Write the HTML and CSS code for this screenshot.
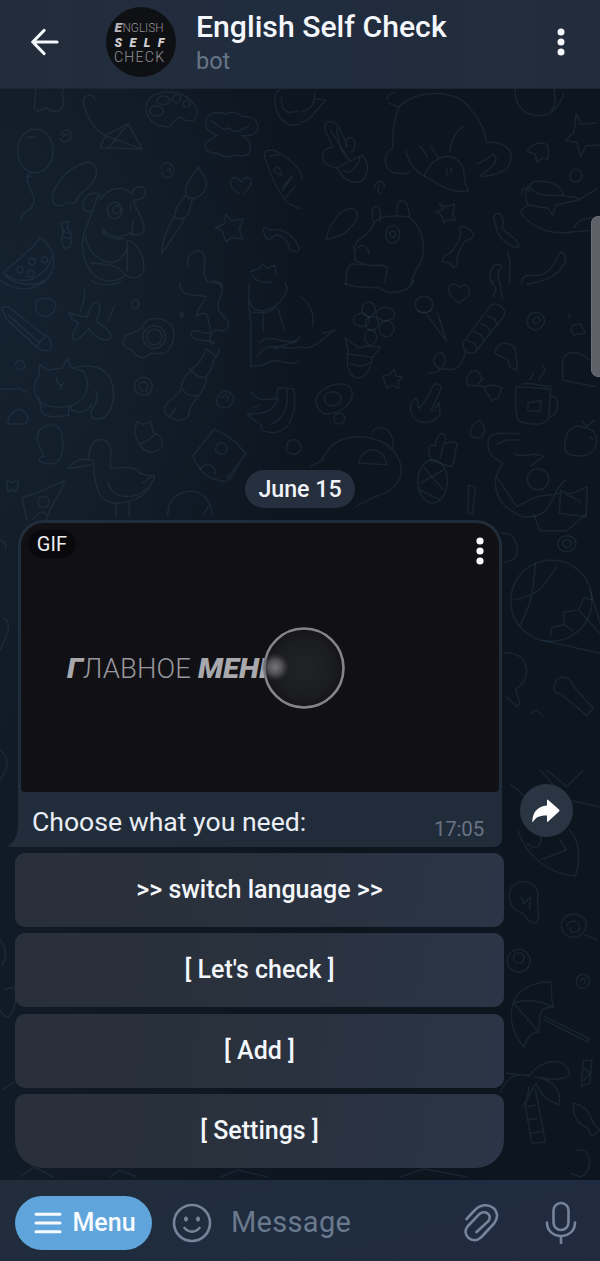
FILE: index.html
```html
<!DOCTYPE html>
<html lang="en">
<head>
<meta charset="utf-8">
<title>English Self Check</title>
<link rel="stylesheet" href="styles.css">
</head>
<body>
<div class="app">
  <header class="header">
    <svg class="back" viewBox="0 0 28 28"><path d="M26 14H2M13 2.500 1.800 14 13 25.500"/></svg>
    <svg class="avatar" viewBox="0 0 70 70">
      <circle cx="35" cy="35" r="35" fill="#0f1013"/>
      <g class="logo-text">
        <text x="8.500" y="25" textLength="7.500" lengthAdjust="spacingAndGlyphs" class="heavy">E</text>
        <text x="16.500" y="25" textLength="41" lengthAdjust="spacingAndGlyphs" class="thin">NGLISH</text>
        <text x="8.500" y="39.500" textLength="50" class="heavy self">SELF</text>
        <text x="8" y="54.500" textLength="50" class="thin check">CHECK</text>
      </g>
    </svg>
    <div class="titles">
      <div class="title">English Self Check</div>
      <div class="subtitle">bot</div>
    </div>
    <svg class="dots" viewBox="0 0 8 28"><circle cx="4" cy="4" r="3.500"/><circle cx="4" cy="14" r="3.500"/><circle cx="4" cy="24" r="3.500"/></svg>
  </header>

  <main class="chat">
    <svg class="wallpaper" viewBox="0 89 600 1091">
      <g transform="translate(0 85) scale(.33333)">
        <path d="M106 12c6 22-8 45-2 60 12 12 22 2 34-5 10 12 24 14 40 9 14-10 16-34 8-46l4-18M285 45c-8-24-36-14-35 8 6 36 30 76 52 90l22 14M300 188l18-38 66-34 42 76zM384 118l-58 70M318 152l106 40M300 188l126 4"/>
        <ellipse cx="106" cy="198" rx="53" ry="66"/><path d="M92 262l-12 12h16M82 276c-4 32 36 60 12 92-12 10-34 16-30 40M80 158l24-4M182 152c2-22 34-22 32 0s-30 24-34 6M190 156c2-12 16-8 14 0M438 72c-2-40 40-54 80-50 40 4 78 34 72 70-6 22-30 18-44 8-16-14-22 16-38 24-34 6-70-20-70-52z"/>
        <ellipse cx="490" cy="46" rx="20" ry="13"/><ellipse cx="470" cy="78" rx="21" ry="15"/><circle cx="530" cy="42" r="12"/><circle cx="560" cy="56" r="10"/>
        <path d="M618 105c8-26 40-26 60-18 18-10 38-4 50 8 24-4 46 8 46 36-8 24-34 22-50 20 32 14 30 34 24 54-16 14-34 4-48 6-20 10-40 0-50-8-20 4-38-6-34-26 10-10 22-18 38-28-22 0-40-16-36-44zM630 108c24 4 32 36 56 20 20 24 38 2 60-4M826 60c-6-36 10-48 24-50M845 36c-6 40 18 56 48 40M826 60c10 50 40 70 74 56M158 330c10-46 70-98 108-98 42 12 22 60-16 88-22 14-18 44-44 32-22 12-54 22-48-22zM482 252c4-30 44-18 40 8-8 26-42 22-34-4M500 258c8-18 20 0 6 6M596 246c-28 40-44 56-38 84 14 20 44 10 60-20 8-28-12-42-22-64zM558 332c-16 12-30 38-36 62 14 12 30 10 42-6l16-52M522 394c-24 40-34 70-38 112 20-28 48-64 72-110"/>
        <path d="M722 326c-34-10-40-48-16-48 14 0 12 12 18 12 10-20 34-16 28 10l-22 28M678 388l16 20 36-6-12 30 10 30-34-4-16 12-10-30-22-14 26-8zM796 220c-10-30 18-28 40-18 30 18 70 50 70 80M796 220c12 44 38 96 64 132l40 20M808 214l30-6M846 320l34-50M822 258q8-24 20 0t-20 0M880 270l-36 40M888 300l-32 40M790 438c-4-16 12-10 18-2 40-10 84 20 90 62M790 438c10 36 20 26 36 12 24 0 38 18 44 46l26 4M750 560l30-10 8-14 14 14 22-10 6 30M756 570q20 30 60 20"/>
        <path d="M248 366c0-34 26-46 48-40l6 16c32-44 74-34 94-16 4-24 36-30 40-6-2 24-18 26-36 24 8 34 38 68 32 92-10 18-30 16-44 8-26 20-64 10-80-12M296 326c-10 30-28 76-40 108-26 60 6 150 70 154 20 2 40-8 52-18 24 20 52 4 54-24 0-48-30-78-54-80M248 366c4 16 22 16 34 10M308 432c-8 8 18 36 68 28M258 450c-4 64 100 132 126 30M272 534c32 4 80 0 104 36M382 470v90"/>
        <ellipse cx="344" cy="376" rx="22" ry="25"/><circle cx="350" cy="374" r="12"/><path d="M392 352v24M402 404c-12 16 0 26-6 42M10 564c28-30 74-58 112-106 48 36 54 100 8 134-54 14-100 0-120-28zM10 564c70 50 130 10 152-60"/><circle cx="96" cy="530" r="10"/><circle cx="134" cy="524" r="9"/><circle cx="60" cy="554" r="9"/><circle cx="92" cy="566" r="10"/><path d="M182 414l8 22-6 32 10 22 18-4 2-40-12-16 4-22zM184 436l26 10M184 456l28 4M566 548c-12-38 18-58 38-48 28 26-10 68 20 90 28 2 40 4 40 20"/>
      </g>
      <g transform="translate(300 85) scale(.33333)">
        <path d="M0 110c30 4 44-34 78-64l-32-4M44 22c0 46-18 54-44 60M74 130c-2-30 30-24 42-2 10 18 20 36 26 56M74 130l24 56M140 190c-10-30 12-42 22-24 6 24 0 34-10 36M98 186c-40 6-36 40-14 54l28 10M92 136l60 96M110 130l10 60 30 40M112 248l76-38c20 26 20 50-2 78-30 10-56 0-74-40zM128 254c20 24 50-16 52-40"/>
        <path d="M260 44c6-26 24-18 28-24M264 54l34 12c36-48 168-60 208 0 44 50 50 80 54 106 50-4 84 20 70 60-8 32-54 40-92 42 52-36 60-54 40-66-12 8-28 24-52 30M298 66c-24 56-18 90-20 124-40 22-20 76 12 74 30 4 36 0 44-8M318 196c2 20 20 62 54 76M450 202c0-42 22-62 40-80M358 180l26 36M392 184l24 34M372 272c42-86 110-64 120-12-2 26 8 44 12 58-44 8-74-10-132-46zM440 246v24M454 248v16M646 12c-4 48 24 80 74 80 42-2 64-40 72-70M762 12c2 30 10 44-8 64M222 416c-10-30-4-54 8-52 14 6 12 36 8 48M290 388c0-40 8-46 26-38 10 10 10 34 14 46 36 40 44 70 40 110-8 40-30 50-38 94M220 416c20-28 64-24 110-20M220 416c-12 40-50 40-58 70l4 40c24 10 50 24 84 12M138 600c0-40 4-54 16-64l90 6c34 0 10 28 10 54M166 498c16-30 44-10 40 10"/>
        <ellipse cx="278" cy="448" rx="21" ry="27"/><circle cx="278" cy="448" r="9"/><path d="M78 464c10-54 50-104 86-90 26 20-20 72-52 80zM224 310c-2-30 34-24 28-2M238 300c-12 18 0 30 10 26M418 354l16 12 30-8-6 30 8 18-24-2-10 10-8-24-16-8 22-10zM476 428c20-10 40 10 46 20-12 30-24 0-40 44-20 24-2 54-22 56-6-12-12-16-32-18 2-30 24-14 36-44 14-24 26-34 12-58zM692 184l22-10 26 4 6 20-4 26-14-6-16 14-8-26-22-6zM828 86l16 32 46-4M828 86l-6 56-26 24 34 6 12 44 16-34 42-2M812 264c14-20 36-10 34 12-14 26-40 16-34-12zM584 390c20-16 30 14 22 36 8 26 48 26 50 60-24 4-66-28-68-64-6-10-8-26-4-32zM576 600c-20-52 18-76 30-54-20 14-10 34-6 54M622 500l8 30-2 70M664 598c0-34 30-26 60-28 44-18 40-54 60-70 28 18 4 48-8 60-36 30-60 30-98 38M660 378l24-18c-20-40 6-72 30-72 40 2 64 8 78 44 24 10 36-4 44 12l56-32M688 304c16 28 66 30 104 26M660 380c40 60 110 70 160 60l70-4M684 360l60 10 14 20 10-30 70-16M666 330c-4-24 20-24 22-10M820 430c24-40 60-30 74-30"/>
      </g>
      <g transform="translate(0 280) scale(.33333)">
        <path d="M4 84c14-8 30 0 38 10l86 68c18 6 32 26 24 44-10 12-24 6-34 2L20 118zM108 200l32-36M24 104l94 84M0 0c40 30 100 40 132 0M272 0c24 18 60 16 94 6M112 60c26-10 44-4 56 10 0 34-28 44-44 36-22-10-18-32-12-46zM252 28c8 24-6 40-10 68M344 76l-20 48M206 98c20 6 34 10 56 14 6-30 20-54 34-42 8 20 0 36-8 54 20 16 42 22 46 48-16 20-52-2-68-26-12 14-26 34-44 34-14-12 6-34 14-52-14-4-24-10-30-30zM394 72c6-22 26-12 22 4-10 18-22 8-20-2M368 188c4-30 40-30 58-44 14-38 44-30 72-22 30 14 28 60 12 82-16 28-40 12-58 16-24 20-40 14-54-8-14-4-26-10-30-24z"/><circle cx="463" cy="171" r="34"/><circle cx="463" cy="171" r="23"/><path d="M544 94l6 10-4 8-6-8zM540 6c0 50 42 36 78 44 2 10-30 34-28 58 38-28 36 20 42 48-20 16-50-20-60 4 4 34 60 10 66 34M640 0l26 12c10 26-22 50-10 80 40 38 34 52 12 62-32-20-56 34-22 36"/>
        <path d="M116 288l4-34 24 16 44-6 14-28 12 28c80-20 120 10 126 66 4 50-20 100-62 84-20-30 30-42 8-82M116 288c-30 40-6 96 60 94 80 0 106-66 72-110l-30-8M116 350l10 46c14 22 60 12 80 10v-26M214 376v14c24 10 48 12 62-20M170 290c-6 26 20 28 20 20l-12 18M0 328l60-2 20 12M24 432c0-30 20-44 40-44 28 20 20 34 14 44zM46 256c0-20 28-20 28 0s-24 14-24 4"/><circle cx="430" cy="319" r="27"/><circle cx="430" cy="319" r="13"/><path d="M618 206l32 26 8-24M618 206c-14 60-70 60-76 126-16 20-44 30-50 60 24 34 50 36 74 16 0-50 50-56 54-120 20-20 10-34 28-58M568 264c14 20 30 34 54 26M546 326c14 20 30 26 48 20M530 380l-20 30M652 354c12-34 54-20 48 8-12 34-60 26-48-8M664 354c10-18 30-2 16 10M112 466c10-40 70-44 74 0 6 40 4 86-38 86-40-6-38-22-16-22-4-20-24-30-20-64zM268 540c-10-74 66-80 64-24 2 26-6 40 2 50 32-4 70-10 86 14l30 8c14-10 18 8 4 20-12 40-62 66-120 60-30-10-50-24-54-128zM268 540c-30-8-52 10-66 26l74-12M322 606c20 60 90 50 116 20M348 670v40M388 666v44M426 610l30-22M404 456l6-32 18 10 24-10 8 34c28 8 30 24 26 42-34 34-66 12-82-40zM420 490c20 0 40-24 48-30"/>
        <path d="M748 10c-10 74 10 110 4 140v110l40-6c40-30 70 10 104-10M750 66c10 40 70 34 104-20 12-14 6-30 0-40M756 96c30 6 70 0 76-26M790 90v66M834 86l20 68M780 190c26-40 90 20 120-20M770 230c40-60 80-10 130-30M820 206l72-22M752 336c30 34 50 20 76 20l6-32 46 2c14 60-6 128-60 132-40-4-38-10-34-20-20-20-34-20-44-36 30-4 70 10 94-50M758 384l24-10M860 330c8 50-10 90-50 104M578 528l64-80c40 16 60 30 96 74-24 20-28 60-60 84-40-8-70-10-100-78zM680 596l54-70"/><circle cx="664" cy="506" r="17"/><path d="M600 570c10-26 46-20 46 14M20 600l16 8 18-8v20l-6 16-12-6-12 4-4-20zM66 652l42-12 84-38c4 20-40 70-54 118M66 652l14 68M98 720c26-40 40-20 44-10"/><circle cx="131" cy="666" r="17"/><path d="M504 710c-4-50 30-80 80-76 26 8 50 26 52 70M612 700l20-30M860 500c4-36 50-20 42 10-14 24-50 10-42-10"/>
      </g>
      <g transform="translate(300 280) scale(.33333)">
        <path d="M130 10l40 10 70 4 20 12c60 4 80-20 80-36M446 30c4-26 24-20 32-8 16-16 34 0 30 18-10 24-24 18-30 28-20-10-30-20-32-38z"/><circle cx="372" cy="74" r="26"/><path d="M352 90c10 10 40 10 44-4M380 104l60 80-28-86M0 48c50 40 36 70 38 92M0 200c40 20 80-40 106-50l-40 10"/>
        <circle cx="216" cy="130" r="20"/><ellipse cx="184" cy="120" rx="24" ry="20"/><ellipse cx="206" cy="88" rx="20" ry="22"/><ellipse cx="256" cy="102" rx="28" ry="20"/><ellipse cx="260" cy="146" rx="22" ry="24"/><ellipse cx="212" cy="172" rx="18" ry="22"/><path d="M136 174l40 30 26-6 40 4-24 30-72-10zM142 214v40c10 60 70 50 74-22M150 250c30 14 50 6 60-4M488 190l80-108c10-24 60 0 42 28l-84 106c-16 10-36 0-38-26zM500 180c10 10 30 0 30 30M520 154c20 10 30 10 30 30M540 130c20 10 30 10 30 30M560 106c20 10 30 10 30 30M496 214c-10 60-40 60-80 50-30-20-10-46 10-46 20 20 10 60-44 62M576 0l12 30-10 20M600 10l8 50M682 120c10-40 60-20 50 10-20 40-60 10-50-10M700 120c10-16 24-8 18 6-10 10-20 4-18-6M586 220c0-40 60-40 62 0l4 50-22-8c-6-40-20-20-44-42zM500 314c0-40 20-44 30-42 14 8 10 20 18 26l-20 20zM556 320c20-10 40 0 50 2l-10 30-20 10-20-30zM532 316l24 6M648 320l104 6-6 90c-20 26-60 16-90 8-10-20-10-70-8-104zM664 312c30-8 60 10 90 6M752 350c30-10 26 60-2 60M684 368l40-6-4 32-36-2zM688 300l14-20M716 300l20-30-10-16M788 300v-60c10-30 50-30 80 0M788 300l100 20M802 100l10 14M820 134l-8 20 10 10 34-4-14-28z"/>
        <path d="M48 360c0-34 80-66 104-36 20 40-30 80-80 78-14-8-24-20-24-42z"/><ellipse cx="98" cy="356" rx="25" ry="21"/><circle cx="118" cy="416" r="16"/><path d="M248 288l20-4 14-16 6 20 20 4-14 12 2 20-20-8-16 8zM400 316c10-10 28 0 22 12-6 20-20 40-28 62 20 10 10-20 24-20l2 34c-30 30-60 30-80 6-12-20-14-40 8-54 14 10-2 20 10 30 14-20 30-40 42-70zM512 470c-4-30 10-40 24-50 24 20 20 40 6 54l-30-4zM564 490c0-30 20-34 94-28M590 492l30-12h40M564 490c0 50 40 50 44 60-44 60-20 130 60 160 100 10 80-80 130-110M590 590l60 90 60-30 70-10M640 520c30 20 60-10 90 10l-40 30"/><circle cx="714" cy="598" r="32"/><path d="M66 540c40-100 180-80 220-20 40 60 10 110-60 130l-60 30M220 462c-10-24 60-40 60 40M30 560l40-20M176 550c10-60 80-50 84 4zM390 530c-10-30 0-40 16-30 0-20 10-40 22-40 14 10 10 20 4 34 14-10 30-10 40-4-10 30-4 60-20 70l-60-20zM430 496l-10 40"/>
        <ellipse cx="398" cy="604" rx="44" ry="65"/><path d="M370 560l60 70M360 610l70-40M360 630l60 30M506 616l20 4-8 84-14-8zM794 500c0-60 40-70 60-56 50 0 50 80-10 84-20 0-50 0-50-28zM844 420l16 20 24-20M782 630c20 20 40 10 80-10l-4 90-80-10zM782 630c30 30 50 20 60 40M870 470l12 10"/>
      </g>
      <g transform="translate(340 510) scale(.33333)">
        <path d="M580 12l20 50 80 0 60-50M484 70c40-10 60 50 40 76l-34 14M654 100c0-30 54-30 54 0-4 36-60 30-54 0M668 100c0-16 28-16 26 4-8 14-24 8-26-4"/><circle cx="634" cy="272" r="122"/><path d="M518 270c80-10 100-50 132-100M586 160c-6 80-10 120-48 190M632 380l4-28 36-8-2-38 44-6 18-36 30 6M672 344l30 20M604 390l176 40M750 240l34 110M716 300l64 70M490 430c80-10 90 80 36 108l14 40-10 12-30-30M644 520c10-30 50-20 54 6l62 70-20 20-80-66c-14 4-20-10-16-30zM570 610l20-10 20 20"/>
      </g>
      <g transform="translate(300 770) scale(.33333)">
        <path d="M720 0l80 90 100 20M740 0l60 50 50-50M630 40l80 70M652 180c30 80 90 130 174 138 20-60 10-110-20-140M680 220c50 40 50-40 30-30M720 270l80-30-20-30M628 380c-4-60 90-60 86 0-6 40 10 60-4 78-20 6-30-14-40-26-24-10-40-20-42-52zM662 380l10 20 20-20-4 40M784 470c-4-50 80-50 74 0-10 46-70 40-74 0zM800 470c4-24 40-20 40 4-6 24-38 10-28-2M852 494l40 16"/>
      </g>
      <g transform="translate(300 940) scale(.33333)">
        <circle cx="656" cy="62" r="34"/><circle cx="656" cy="54" r="16"/><path d="M830 120c6-30 44-16 38 8-10 30-46 16-38-8M842 122c8-14 20 0 10 8M640 188c14-40 60-64 116-62-4 30 0 60 4 76-20-2-30 4-38 14-4 20-4 40-6 60-20 0-34 16-44 44-40-40-44-100-32-132zM640 188c40-10 80-10 120 14M640 188l76 88M734 230l134 66-6 10-132-68M618 400l72 6c40-60 120-50 118 0-30 20-70 10-104 4 60 10 80 40 74 84-30-10-50-20-70-64l-40 70M690 410c-50-20-80 20-90 50M688 440l-12 60 20 110 40-4-30-160M680 500l26-4M680 540l36-6M690 580l36-6M850 362l26-2-6 70-26 8zM850 382l20 20-20 20M820 490c40 10 50 30 60 60l20 20-26 18-10-24c-30-10-46-34-44-74zM830 630c50-10 50 70 10 80l-30-10"/>
      </g>
      <path d="M0 540q8 2 5 10M0 650q15-28 3-32M0 940q10 12 2 25M4 990q16-8 11 14T0 1010M2 1090l12-8M20 1177l14-10 20 10M110 1177l10-7 17 7M220 1177l18-7 30 7M400 1177l24-8 44 8M0 750q14 10 0 30"/>
    </svg>

    <div class="date">June 15</div>

    <div class="message-row">
      <div class="message">
        <div class="bubble">
          <svg class="tail" viewBox="0 0 12 20"><path d="M12 0v20H1q-2-1 0-2Q9 13 10 0z"/></svg>
          <div class="video">
            <svg class="clip" viewBox="0 0 478 269">
              <defs>
                <radialGradient id="lens"><stop offset="0" stop-color="#222327"/><stop offset=".75" stop-color="#1b1c1f"/><stop offset="1" stop-color="#151518"/></radialGradient>
                <radialGradient id="glow"><stop offset="0" stop-color="#77777b"/><stop offset=".5" stop-color="#606064" stop-opacity=".8"/><stop offset="1" stop-color="#444" stop-opacity="0"/></radialGradient>
              </defs>
              <text x="46" y="155" class="clip-heavy" textLength="16" lengthAdjust="spacingAndGlyphs">Г</text>
              <text x="62" y="155" class="clip-light" textLength="108">ЛАВНОЕ</text>
              <text x="177" y="155" class="clip-heavy" textLength="89" lengthAdjust="spacingAndGlyphs">МЕНЮ</text>
              <circle cx="283" cy="145" r="39.500" fill="url(#lens)" stroke="#858488" stroke-width="2.600"/>
              <circle cx="254" cy="144" r="14" fill="url(#glow)"/>
            </svg>
            <span class="gif">GIF</span>
            <svg class="dots video-dots" viewBox="0 0 8 28"><circle cx="4" cy="4" r="3.600"/><circle cx="4" cy="14" r="3.600"/><circle cx="4" cy="24" r="3.600"/></svg>
          </div>
          <div class="caption"><span>Choose what you need:</span><time>17:05</time></div>
        </div>
        <div class="keyboard">
          <button>&gt;&gt; switch language &gt;&gt;</button>
          <button>[ Let's check ]</button>
          <button>[ Add ]</button>
          <button>[ Settings ]</button>
        </div>
      </div>
      <div class="share"><svg viewBox="0 0 28 24"><path d="M15 1.500q0-1.500 1.200-.5L27 10.500q1 1 0 2L16.200 22.500q-1.200 1-1.200-.5v-5.500C8 16.500 4 18 1.200 22.500.8 23.500.2 23 .3 22 1 13 5.500 7.300 15 6.500z"/></svg></div>
    </div>
    <div class="edge-handle"></div>
  </main>

  <footer class="composer">
    <div class="menu"><svg viewBox="0 0 28 22"><path d="M2 2.200h24M2 11h24M2 19.800h24"/></svg><span>Menu</span></div>
    <svg class="line-icon smile" viewBox="0 0 40 40"><circle cx="20" cy="20" r="18"/><path d="M12.500 25c4 4.800 11 4.800 15 0"/><ellipse cx="14" cy="16" rx="1.500" ry="2.200" class="solid"/><ellipse cx="26" cy="16" rx="1.500" ry="2.200" class="solid"/></svg>
    <span class="placeholder">Message</span>
    <svg class="line-icon clip-icon" viewBox="0 0 36 42"><path d="M2.500 17 11 8C23-4 40 9 30 21.500L17 35.500C8.500 43-3 33 3.500 24.500L14.500 12.800C21 6.500 29.500 13.500 24 19.500L12.500 30"/></svg>
    <svg class="line-icon mic" viewBox="0 0 32 44"><rect x="8.500" y="3" width="15" height="27" rx="7.500"/><path d="M2 22.500c0 18 28 18 28 0M16 36v7"/></svg>
  </footer>
</div>
</body>
</html>
```
FILE: styles.css
```css
* { box-sizing: border-box; }
body { margin: 0; font-family: Roboto, "Open Sans", sans-serif; background: #0e1620; }
.app { width: 600px; height: 1261px; display: flex; flex-direction: column; overflow: hidden; }
svg { display: block; flex: none; }

.header {
  height: 89px; flex: none; display: flex; align-items: flex-start;
  background: linear-gradient(90deg, #232c3b, #202d3e 45%, #222c3c);
  border-bottom: 1px solid #1b2533;
}
.back { width: 28px; height: 28px; margin: 28px 0 0 31px; fill: none; stroke: #f3f6fb; stroke-width: 3.200; stroke-linecap: round; stroke-linejoin: round; }
.avatar { width: 70px; height: 70px; margin: 7px 0 0 47px; }
.logo-text { fill: #b9b7bb; font-size: 13.500px; }
.heavy { font-weight: 900; font-style: italic; }
.thin { font-weight: 300; fill: #96949a; }
.self { font-size: 12.500px; fill: #d0ced2; }
.check { font-size: 14px; }
.titles { flex: 1; margin: 9px 0 0 20px; }
.title { font-weight: 500; font-size: 30.200px; line-height: 35px; color: #f4f7fc; white-space: nowrap; }
.subtitle { font-size: 23.500px; line-height: 30px; margin-top: 2px; color: #687586; }
.dots { width: 8px; height: 28px; fill: #f4f7fc; }
.header .dots { margin: 28px 35px 0 0; }

.chat {
  position: relative; flex: 1; min-height: 0; display: flex; flex-direction: column; align-items: flex-start;
  background:
    radial-gradient(ellipse 300px 420px at 0 230px, #14212e, rgba(20, 33, 46, 0)),
    linear-gradient(90deg, #111b27, #0d151f 55%, #0d161f);
}
.wallpaper { position: absolute; left: 0; top: 0; width: 600px; height: 1091px; fill: none; stroke: rgba(92, 124, 156, .14); stroke-width: 1.500; stroke-linejoin: round; }
.wallpaper g { stroke-width: 4.500; }
.date {
  position: relative; align-self: center; margin-top: 381px; width: 110px; height: 38px; border-radius: 19px;
  background: #262f3d; color: #f0f3f8; font-weight: 500; font-size: 23.200px; line-height: 39px; text-align: center;
}
.message-row { position: relative; display: flex; margin: 12px 0 0 15px; }
.message { width: 489px; }
.bubble { position: relative; width: 484px; height: 327px; margin-left: 3px; padding: 3px; border-radius: 26px 26px 8px 0; background: linear-gradient(90deg, #222d3b, #212c3b); }
.tail { position: absolute; left: -10px; bottom: 0; width: 12px; height: 20px; fill: #222d3b; }
.video { position: relative; width: 478px; height: 269px; border-radius: 23px 23px 4px 4px; background: #111014; overflow: hidden; }
.clip { width: 478px; height: 269px; }
.clip-heavy { font-weight: 900; font-style: italic; font-size: 27.500px; fill: #a9a8ac; }
.clip-light { font-weight: 300; font-size: 27.500px; fill: #99989d; }
.gif { position: absolute; left: 7px; top: 7px; width: 48px; height: 28px; border-radius: 14px; background: #09090c; color: #eceef2; font-size: 20px; line-height: 28px; text-align: center; letter-spacing: .2px; }
.video-dots { position: absolute; right: 15px; top: 14px; }
.caption { display: flex; justify-content: space-between; padding: 13px 15px 0 11px; color: #e9edf5; font-size: 26.600px; line-height: 33px; white-space: nowrap; }
.caption time { color: #687383; font-size: 20.500px; margin-top: 8px; letter-spacing: -.2px; }
.keyboard { display: grid; gap: 6.700px; margin-top: 6px; }
.keyboard button {
  height: 73.800px; padding: 1px 0 0; border: 0; border-radius: 10px; font: 500 25px/72.800px Roboto, sans-serif; color: #f3f6fa;
  background: linear-gradient(100deg, #293039 25%, #2a3240 60%, #2b3547);
}
.keyboard button:last-child { border-radius: 10px 10px 28px 28px; }
.share { width: 53px; height: 53px; margin: 264px 0 0 15.500px; border-radius: 50%; background: #2a3544; display: grid; place-items: center; }
.share svg { width: 28px; height: 24px; fill: #fff; }
.edge-handle { position: absolute; left: 591px; top: 127px; width: 16px; height: 161px; border-radius: 7px; background: #5d6067; border: 1px solid #6b6e75; }

.composer { position: relative; height: 81px; flex: none; display: flex; align-items: center; padding: 0 23px 0 15px; background: linear-gradient(165deg, #222d3b, #1f2c3f 50%, #222a3f); }
.menu { width: 137px; height: 54px; margin-top: 4px; border-radius: 27px; background: #5fa5dc; display: flex; align-items: center; padding-left: 19px; gap: 10.500px; color: #f7fbff; font-weight: 500; font-size: 25px; }
.menu svg { width: 28px; height: 22px; stroke: #f7fbff; stroke-width: 3; stroke-linecap: round; }
.line-icon { fill: none; stroke: #75849a; stroke-width: 2.600; stroke-linecap: round; stroke-linejoin: round; }
.solid { fill: #75849a; stroke-width: 1; }
.smile { width: 40px; height: 40px; margin: 4px 0 0 20px; }
.placeholder { flex: 1; margin: 3px 0 0 19px; font-size: 29px; letter-spacing: .3px; line-height: 36px; color: #6b798c; }
.clip-icon { width: 36px; height: 42px; margin: 4px 0 0; }
.mic { width: 32px; height: 44px; margin: 3px 0 0 45px; }
```
